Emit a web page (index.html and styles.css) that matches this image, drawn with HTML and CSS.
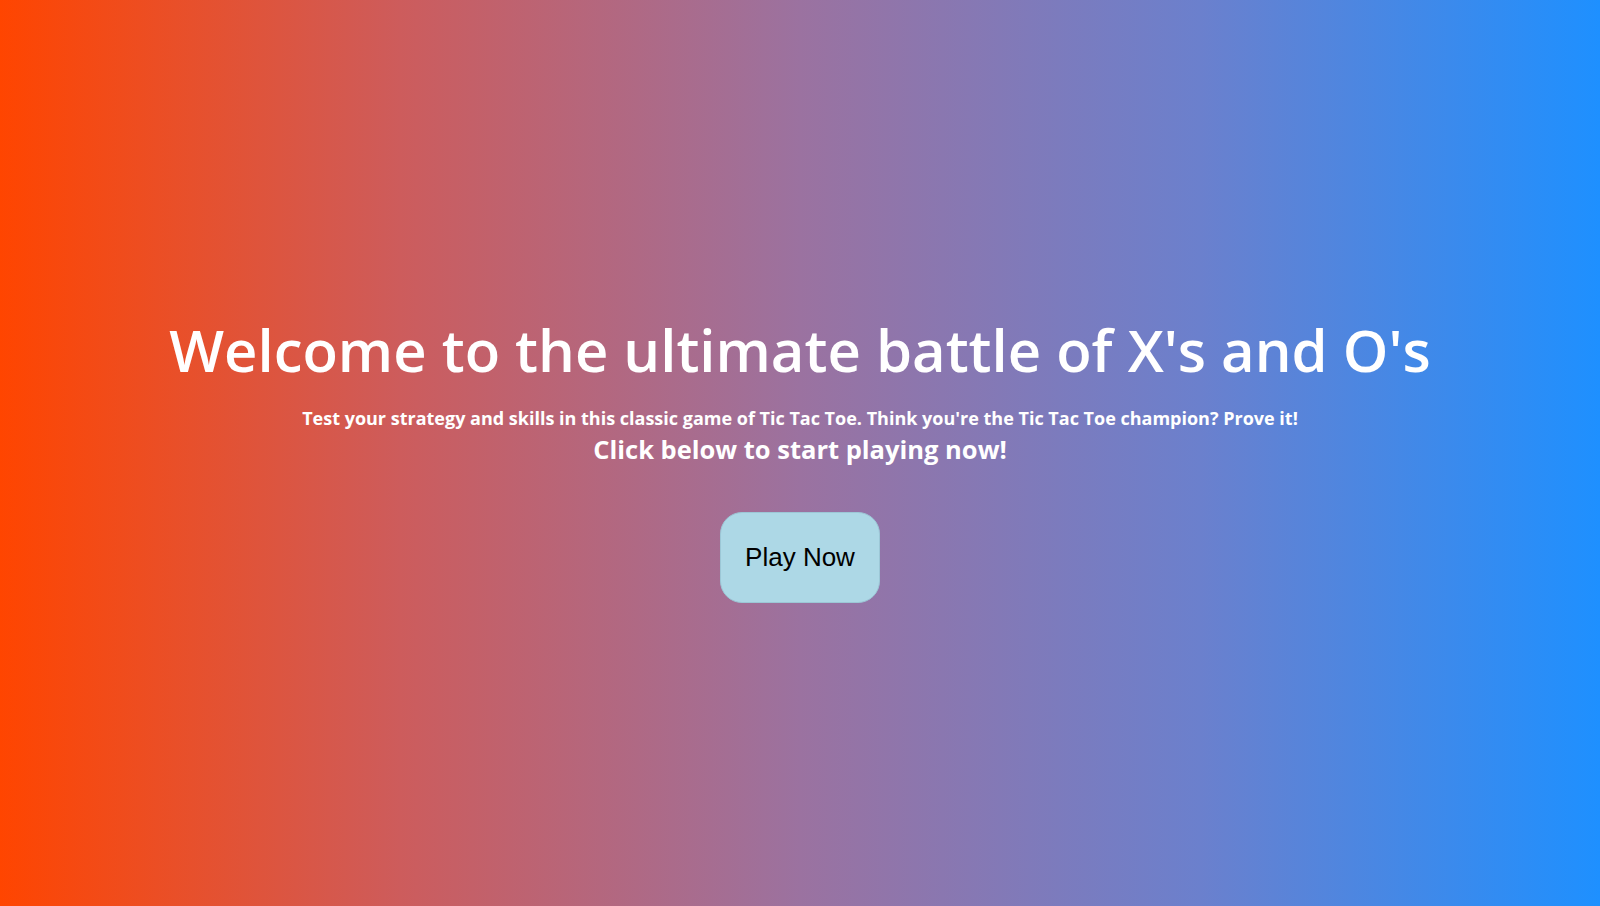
FILE: index.html
```html
<!DOCTYPE html>
<html lang="en">
<head>
<meta charset="utf-8">
<title>Tic Tac Toe</title>
<link rel="stylesheet" href="styles.css">
</head>
<body>
<main class="hero">
  <h1 class="title">Welcome to the ultimate battle of X's and O's</h1>
  <p class="lead">Test your strategy and skills in this classic game of Tic Tac Toe. Think you're the Tic Tac Toe champion? Prove it!</p>
  <p class="cta-text">Click below to start playing now!</p>
  <button class="play-btn" type="button">Play Now</button>
</main>
</body>
</html>
```

FILE: styles.css
```css
html, body {
  margin: 0;
  padding: 0;
  height: 100%;
}
body {
  background: linear-gradient(to right, #ff4500 0%, #cd5c5c 25%, #9b72a0 50%, #6b80cd 75%, #1e90ff 100%);
  color: #fff;
  font-family: "Open Sans", "Lato", sans-serif;
}
.hero {
  box-sizing: border-box;
  height: 100%;
  padding-top: 12px;
  display: flex;
  flex-direction: column;
  align-items: center;
  justify-content: center;
  text-align: center;
}
.title {
  margin: 0 0 22px;
  font-family: "Open Sans", sans-serif;
  font-weight: 600;
  font-size: 58px;
  line-height: 1.2;
}
.lead {
  margin: 0;
  font-weight: 700;
  font-size: 18px;
  line-height: 1.3;
}
.cta-text {
  margin: 3px 0 0;
  font-weight: 700;
  font-size: 25.5px;
  line-height: 1.3;
}
.play-btn {
  margin-top: 46px;
  width: 160px;
  height: 91px;
  border: 1px solid #9cc7d6;
  border-radius: 22px;
  background: #add8e6;
  color: #000;
  font-family: "Liberation Sans", Arial, sans-serif;
  font-size: 26px;
}
```
